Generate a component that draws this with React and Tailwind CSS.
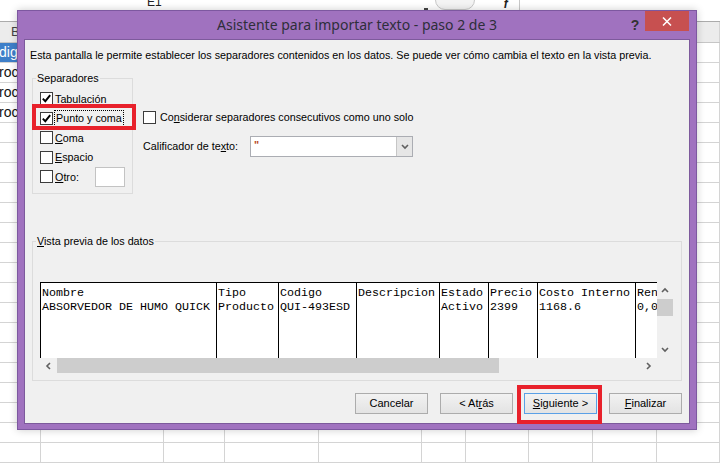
import React from "react";

const ui = "font-['Liberation_Sans',Arial,sans-serif]";
const mono = "font-['Liberation_Mono','Courier_New',monospace]";

const sheetCols = [
  "w-[41px]",
  "w-[123px]",
  "w-[61px]",
  "w-[94px]",
  "w-[103px]",
  "w-[44px]",
  "w-[63px]",
  "w-[64px]",
  "w-[64px]",
  "flex-1",
];

const previewCols = [
  { w: "w-[176px]", head: "Nombre", row: "ABSORVEDOR DE HUMO QUICK" },
  { w: "w-[62px]", head: "Tipo", row: "Producto" },
  { w: "w-[78px]", head: "Codigo", row: "QUI-493ESD" },
  { w: "w-[83px]", head: "Descripcion", row: "" },
  { w: "w-[49px]", head: "Estado", row: "Activo" },
  { w: "w-[49px]", head: "Precio", row: "2399" },
  { w: "w-[98px]", head: "Costo Interno", row: "1168.6" },
  { w: "flex-1", head: "Ren", row: "0,0" },
];

const Chevron = ({ dir }) => {
  const pts = {
    up: "1,5 4,2 7,5",
    down: "1,2 4,5 7,2",
    left: "5,1 2,4 5,7",
    right: "2,1 5,4 2,7",
  }[dir];
  return (
    <svg width="8" height="8" viewBox="0 0 8 8">
      <polyline points={pts} fill="none" stroke="#606060" strokeWidth="1.6" />
    </svg>
  );
};

const Check = ({ checked }) => (
  <span className="w-[13px] h-[13px] border border-[#3c3c3c] bg-white flex items-center justify-center shrink-0">
    {checked && (
      <svg width="11" height="11" viewBox="0 0 11 11">
        <path d="M1.8 5.6 L4.3 8.2 L9.2 2.2" stroke="#000" strokeWidth="1.9" fill="none" />
      </svg>
    )}
  </span>
);

const Sheet = () => (
  <div className={`${ui} flex flex-col h-full`}>
    {/* top strip: name box / formula bar */}
    <div className="h-[21px] flex items-start overflow-hidden text-[#222]">
      <span className="ml-[147px] -mt-[5px] text-[12px] leading-[14px]">E1</span>
      <span className="ml-[262px] mt-[8px] w-[4px] h-[2px] bg-[#444]"></span>
      <span className="ml-[7px] -mt-[10px] w-[40px] h-[20px] rounded-full border border-[#c8c8c8] bg-[#f4f4f4]"></span>
      <span className="ml-[29px] -mt-[3px] italic font-bold text-[12px] leading-[14px] w-[15px]">f</span>
      <span className="h-[12px] border-l border-[#c8c8c8]"></span>
    </div>
    {/* column headers */}
    <div className="h-[22px] flex bg-[#ececec] border-t border-[#ababab] border-b border-b-[#c6c6c6]">
      {sheetCols.map((w, i) => (
        <div key={i} className={`${w} shrink-0 border-r border-[#d4d4d4] text-[13px] text-[#444] leading-[20px]`}>
          {i === 0 ? <span className="pl-[11px]">B</span> : null}
        </div>
      ))}
    </div>
    {Array.from({ length: 21 }).map((_, r) => (
      <div key={r} className="h-[20px] flex border-b border-[#d4d4d4] shrink-0">
        {sheetCols.map((w, i) => (
          <div
            key={i}
            className={`${w} shrink-0 border-r border-[#d4d4d4] overflow-hidden text-[14px] leading-[19px] whitespace-nowrap ${
              i === 0 && r === 0 ? "bg-[#3e7fc9] text-white" : "text-[#111]"
            }`}
          >
            {i === 0 && r === 0 && <span className="-ml-[1px]">dig</span>}
            {i === 0 && r > 0 && r < 4 && <span className="-ml-[1px]">roc</span>}
          </div>
        ))}
      </div>
    ))}
  </div>
);

const Btn = ({ children, className = "", active }) => (
  <button
    className={`w-[73px] h-[21px] shrink-0 border ${
      active ? "border-[#5aa0e6]" : "border-[#acacac]"
    } bg-linear-to-b from-[#f2f2f2] to-[#e3e3e3] text-[11px] leading-[19px] text-black ${className}`}
  >
    {children}
  </button>
);

const Dialog = () => (
  <div className="absolute left-[17px] top-[10px] w-[680px] h-[420px] bg-[#a072bf] border border-[#7d58a0] flex flex-col shadow-[0_0_8px_rgba(0,0,0,0.2)]">
    {/* title bar */}
    <div className="h-[28px] flex items-start shrink-0">
      <div className="flex-1 pl-[68px] text-center font-['Noto_Sans',sans-serif] text-[14px] leading-[28px] text-[#2e2e3a]">
        Asistente para importar texto - paso 2 de 3
      </div>
      <span className={`${ui} w-[14px] text-center font-bold text-[14px] leading-[28px] text-[#333]`}>?</span>
      <div className="ml-[3px] mr-[7px] w-[44px] h-[20px] bg-[#c75050] flex items-center justify-center">
        <svg width="10" height="9" viewBox="0 0 10 9">
          <path d="M1 0.5 L9 8.5 M9 0.5 L1 8.5" stroke="#fff" strokeWidth="1.5" />
        </svg>
      </div>
    </div>

    {/* client area */}
    <div className={`${ui} relative mx-[6px] mb-[5px] flex-1 bg-[#f0f0f0] border border-[#7d5a9c] flex flex-col text-[10.75px] text-black`}>
      <p className="pt-[7px] pl-[5px] leading-[16px] whitespace-nowrap">
        Esta pantalla le permite establecer los separadores contenidos en los datos. Se puede ver cómo cambia el texto en la vista previa.
      </p>

      <div className="mt-[7px] pl-[7px] flex items-start">
        <fieldset className="w-[101px] h-[124px] border border-[#dcdcdc] shrink-0">
          <legend className="ml-[3px] px-[1px] leading-[16px]">Separadores</legend>
          <div className="pl-[7px] pt-[3px] flex flex-col">
            <div className="h-[19.5px] flex items-center">
              <Check checked />
              <span className="ml-[2px]">Tabulación</span>
            </div>
            <div className="h-[19.5px] flex items-center">
              <Check checked />
              <span className="ml-[1px] px-[1px] border border-dotted border-black leading-[15px]">Punto y coma</span>
            </div>
            <div className="h-[19.5px] flex items-center">
              <Check />
              <span className="ml-[2px]">
                <span className="underline">C</span>oma
              </span>
            </div>
            <div className="h-[19.5px] flex items-center">
              <Check />
              <span className="ml-[2px]">
                <span className="underline">E</span>spacio
              </span>
            </div>
            <div className="h-[19.5px] flex items-center">
              <Check />
              <span className="ml-[2px]">
                <span className="underline">O</span>tro:
              </span>
              <span className="ml-auto mr-[7px] w-[30px] h-[20px] border border-[#c3c3c3] bg-white"></span>
            </div>
          </div>
        </fieldset>

        <div className="ml-[10px] pt-[39px] flex flex-col">
          <div className="h-[16px] flex items-center">
            <Check />
            <span className="ml-[4px] leading-[16px]">
              Co<span className="underline">n</span>siderar separadores consecutivos como uno solo
            </span>
          </div>
          <div className="mt-[11px] h-[21px] flex items-center">
            <span className="w-[107px]">
              Calificador de te<span className="underline">x</span>to:
            </span>
            <div className="w-[163px] h-[21px] border border-[#abadb3] bg-white flex">
              <span className="flex-1 pl-[3px] font-bold text-[#b84a1f] leading-[17px]">"</span>
              <span className="w-[16px] border-l border-[#c6c6c6] bg-[#e6e6e6] flex items-center justify-center">
                <Chevron dir="down" />
              </span>
            </div>
          </div>
        </div>
      </div>

      <fieldset className="mt-[39px] ml-[7px] w-[650px] h-[148px] border border-[#dcdcdc] shrink-0">
        <legend className="ml-[3px] px-[1px] leading-[16px]">
          <span className="underline">V</span>ista previa de los datos
        </legend>
        <div className="ml-[7px] mt-[33px] w-[633px] h-[91px] flex flex-col">
          <div className="h-[76px] flex">
            <div className={`${mono} w-[617px] bg-white border-t border-black flex overflow-hidden text-[11.67px] leading-[14px] text-black`}>
              {previewCols.map((c, i) => (
                <div key={i} className={`${c.w} shrink-0 border-l border-black pl-[1px] pt-[3px] overflow-hidden whitespace-pre`}>
                  <div>{c.head}</div>
                  <div>{c.row}</div>
                </div>
              ))}
            </div>
            <div className="w-[16px] flex flex-col">
              <div className="h-[17px] flex items-center justify-center">
                <Chevron dir="up" />
              </div>
              <div className="h-[17px] bg-[#cdcdcd]"></div>
              <div className="flex-1"></div>
              <div className="h-[17px] flex items-center justify-center">
                <Chevron dir="down" />
              </div>
            </div>
          </div>
          <div className="h-[15px] flex">
            <div className="w-[17px] flex items-center justify-center">
              <Chevron dir="left" />
            </div>
            <div className="w-[442px] bg-[#cdcdcd]"></div>
            <div className="flex-1"></div>
            <div className="w-[17px] flex items-center justify-center">
              <Chevron dir="right" />
            </div>
            <div className="w-[16px]"></div>
          </div>
        </div>
      </fieldset>

      <div className="mt-[12px] pr-[7px] flex justify-end">
        <Btn>Cancelar</Btn>
        <Btn className="ml-[12px]">
          &lt; At<span className="underline">r</span>ás
        </Btn>
        <Btn className="ml-[11px]" active>
          <span className="underline">S</span>iguiente &gt;
        </Btn>
        <Btn className="ml-[12px]">
          <span className="underline">F</span>inalizar
        </Btn>
      </div>

      {/* red annotation boxes */}
      <div className="absolute left-[7px] top-[64px] w-[104px] h-[26px] border-4 border-[#e8212b]"></div>
      <div className="absolute left-[492px] top-[345px] w-[85px] h-[39px] border-4 border-[#e8212b]"></div>
    </div>
  </div>
);

export default function App() {
  return (
    <div className="relative w-[720px] h-[464px] overflow-hidden bg-white">
      <Sheet />
      <Dialog />
    </div>
  );
}
